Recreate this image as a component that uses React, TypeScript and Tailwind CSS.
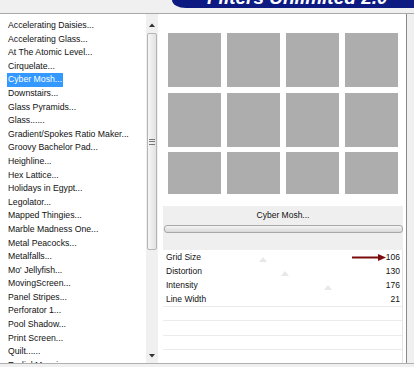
import React from "react";

const items = [
  "Accelerating Daisies...",
  "Accelerating Glass...",
  "At The Atomic Level...",
  "Cirquelate...",
  "Cyber Mosh...",
  "Downstairs...",
  "Glass Pyramids...",
  "Glass......",
  "Gradient/Spokes Ratio Maker...",
  "Groovy Bachelor Pad...",
  "Heighline...",
  "Hex Lattice...",
  "Holidays in Egypt...",
  "Legolator...",
  "Mapped Thingies...",
  "Marble Madness One...",
  "Metal Peacocks...",
  "Metalfalls...",
  "Mo' Jellyfish...",
  "MovingScreen...",
  "Panel Stripes...",
  "Perforator 1...",
  "Pool Shadow...",
  "Print Screen...",
  "Quilt......",
  "Radial Mosaic...",
];

const params = [
  { label: "Grid Size", value: 106 },
  { label: "Distortion", value: 130 },
  { label: "Intensity", value: 176 },
  { label: "Line Width", value: 21 },
];

export default function App() {
  return (
    <div className="w-[414px] h-[367px] overflow-hidden bg-[#f0f0f0] font-['Liberation_Sans',Arial,sans-serif] text-[#111]">
      {/* top strip with banner */}
      <div className="h-[13px] flex justify-end">
        <div className="w-[242px] h-[8px] bg-[#0c1a82] rounded-bl-[14px_8px] overflow-hidden">
          <div className="mt-[-12px] pl-[35px] text-[19px] leading-[19px] font-bold italic text-white whitespace-nowrap">
            Filters Unlimited 2.0
          </div>
        </div>
      </div>
      <div className="h-px bg-[#a8a8a8]" />

      <div className="flex h-[349px]">
        {/* list */}
        <div className="w-[146px] bg-white pt-[5px] pl-[7px] overflow-hidden">
          {items.map((it, i) => (
            <div key={i} className="h-[13.6px] leading-[13.6px] text-[8.7px] whitespace-nowrap">
              <span className={i === 4 ? "inline-block px-px bg-[#3399ff] text-white" : "inline-block px-px"}>{it}</span>
            </div>
          ))}
        </div>

        {/* scrollbar */}
        <div className="w-[12px] bg-[#f0f0f0] flex flex-col">
          <div className="h-[19px] flex items-start justify-center pt-[9px]">
            <svg width="6" height="4" viewBox="0 0 6 4">
              <path d="M0 4 L3 0.5 L6 4 Z" fill="#333" />
            </svg>
          </div>
          <div className="h-[217px] mx-px rounded-[2px] border border-[#b4b4b4] bg-[linear-gradient(to_right,#f6f6f6,#e2e2e2)] flex flex-col items-center justify-center">
            <div className="flex flex-col gap-[1.5px]">
              <div className="w-[6px] h-px bg-[#777]" />
              <div className="w-[6px] h-px bg-[#777]" />
              <div className="w-[6px] h-px bg-[#777]" />
            </div>
          </div>
          <div className="flex-1" />
          <div className="h-[17px] flex items-start justify-center pt-[8px]">
            <svg width="6" height="4" viewBox="0 0 6 4">
              <path d="M0 0 L3 3.5 L6 0 Z" fill="#333" />
            </svg>
          </div>
        </div>

        {/* right panel */}
        <div className="w-[248px] bg-white flex flex-col">
          <div className="pt-[19px] pl-[10px] grid grid-cols-[repeat(4,53px)] grid-rows-[54px_54px_42px] gap-x-[6px] gap-y-[5.5px]">
            {Array.from({ length: 12 }).map((_, i) => (
              <div key={i} className="bg-[#adadad]" />
            ))}
          </div>

          <div className="mt-[12px] ml-[5px] w-[240px] h-[44px] bg-[#efefef] flex flex-col">
            <div className="h-[18px] pt-px flex items-center justify-center text-[8.5px]">Cyber Mosh...</div>
            <div className="mt-[1px] ml-px h-[8px] rounded-[3px] border border-[#a8a8a8] bg-[linear-gradient(to_bottom,#f4f4f4,#d8d8d8)]" />
          </div>

          <div className="ml-[5px] w-[240px] flex-1 border-r border-[#e4e4e4] flex flex-col">
            {params.map((p, i) => (
              <div key={i} className="relative h-[14px] flex items-center justify-between pl-[3px] pr-[2px] text-[8.5px]">
                {i < 3 && (
                  <svg
                    className="absolute top-[7px]"
                    style={{ left: `${p.value * 0.94 - 4}px` }}
                    width="8"
                    height="5"
                    viewBox="0 0 8 5"
                  >
                    <path d="M0 5 L4 0 L8 5 Z" fill="#e8e8e8" />
                  </svg>
                )}
                <span className="relative">{p.label}</span>
                <span className="relative">{p.value}</span>
                {i === 0 && (
                  <svg className="absolute left-[189px] top-[4px]" width="34" height="7" viewBox="0 0 34 7">
                    <path d="M0 3.5 H28" stroke="#7a0c0c" strokeWidth="2" />
                    <path d="M26 0 L34 3.5 L26 7 Z" fill="#7a0c0c" />
                  </svg>
                )}
              </div>
            ))}
            {[0, 1, 2, 3].map((i) => (
              <div key={i} className="h-[14.25px] border-t border-[#ececec]" />
            ))}
          </div>
        </div>

        <div className="w-px bg-[#8a8a8a]" />
        <div className="flex-1 bg-[#f0f0f0]" />
      </div>
      <div className="h-px bg-[#b0b0b0]" />
    </div>
  );
}
